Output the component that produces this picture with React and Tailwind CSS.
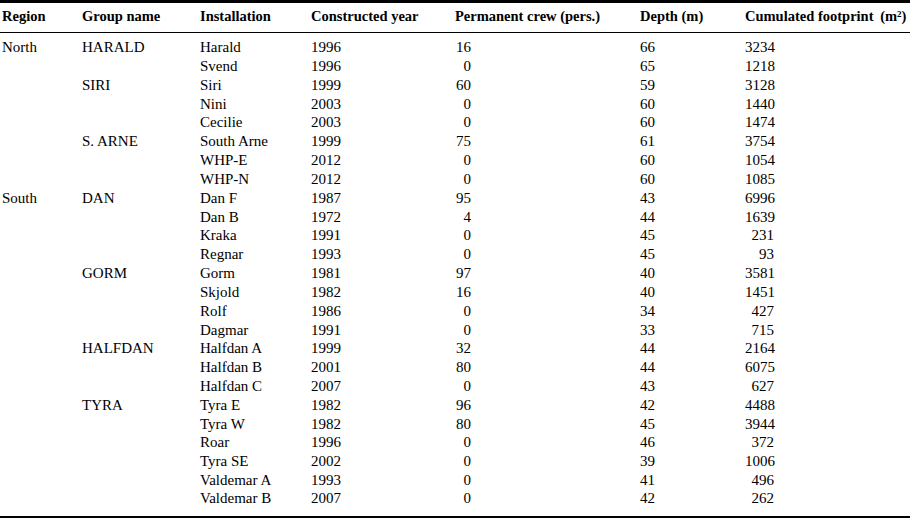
import React from "react";

const rows = [
  ["North", "HARALD", "Harald", "1996", "16", "66", "3234"],
  ["", "", "Svend", "1996", "0", "65", "1218"],
  ["", "SIRI", "Siri", "1999", "60", "59", "3128"],
  ["", "", "Nini", "2003", "0", "60", "1440"],
  ["", "", "Cecilie", "2003", "0", "60", "1474"],
  ["", "S. ARNE", "South Arne", "1999", "75", "61", "3754"],
  ["", "", "WHP-E", "2012", "0", "60", "1054"],
  ["", "", "WHP-N", "2012", "0", "60", "1085"],
  ["South", "DAN", "Dan F", "1987", "95", "43", "6996"],
  ["", "", "Dan B", "1972", "4", "44", "1639"],
  ["", "", "Kraka", "1991", "0", "45", "231"],
  ["", "", "Regnar", "1993", "0", "45", "93"],
  ["", "GORM", "Gorm", "1981", "97", "40", "3581"],
  ["", "", "Skjold", "1982", "16", "40", "1451"],
  ["", "", "Rolf", "1986", "0", "34", "427"],
  ["", "", "Dagmar", "1991", "0", "33", "715"],
  ["", "HALFDAN", "Halfdan A", "1999", "32", "44", "2164"],
  ["", "", "Halfdan B", "2001", "80", "44", "6075"],
  ["", "", "Halfdan C", "2007", "0", "43", "627"],
  ["", "TYRA", "Tyra E", "1982", "96", "42", "4488"],
  ["", "", "Tyra W", "1982", "80", "45", "3944"],
  ["", "", "Roar", "1996", "0", "46", "372"],
  ["", "", "Tyra SE", "2002", "0", "39", "1006"],
  ["", "", "Valdemar A", "1993", "0", "41", "496"],
  ["", "", "Valdemar B", "2007", "0", "42", "262"],
];

export default function App() {
  const last = rows.length - 1;
  return (
    <div
      className="w-[910px] h-[518px] bg-white text-black overflow-hidden"
      style={{ fontFamily: '"Liberation Serif", "DejaVu Serif", serif' }}
    >
      <table className="w-[910px] table-fixed border-collapse text-[15px] leading-none">
        <colgroup>
          <col className="w-[82px]" />
          <col className="w-[118px]" />
          <col className="w-[111px]" />
          <col className="w-[144px]" />
          <col className="w-[185px]" />
          <col className="w-[105px]" />
          <col className="w-[165px]" />
        </colgroup>
        <thead>
          <tr className="h-[31px] border-t-[3px] border-b border-black text-left text-[14.5px]">
            <th className="pl-[2px] pb-[2px] font-bold">Region</th>
            <th className="pb-[2px] font-bold">Group name</th>
            <th className="pb-[2px] font-bold">Installation</th>
            <th className="pb-[2px] font-bold">Constructed year</th>
            <th className="pb-[2px] font-bold">Permanent crew (pers.)</th>
            <th className="pb-[2px] font-bold">Depth (m)</th>
            <th className="pb-[2px] font-bold whitespace-nowrap">
              Cumulated footprint <span className="ml-[3px]">(m<sup className="text-[9px]">2</sup>)</span>
            </th>
          </tr>
        </thead>
        <tbody className="border-b-[3px] border-black">
          {rows.map((r, i) => {
            const trH = i === 0 ? "h-[24.5px]" : i === last ? "h-[27px]" : "h-[18.83px]";
            const pad = i === 0 ? "pt-[5.75px]" : i === last ? "pb-[8.25px]" : "";
            return (
              <tr key={i} className={trH}>
                <td className={`pl-[2px] ${pad}`}>{r[0]}</td>
                <td className={pad}>{r[1]}</td>
                <td className={`${pad} whitespace-nowrap`}>{r[2]}</td>
                <td className={pad}>{r[3]}</td>
                <td className={pad}>
                  <span className="inline-block w-[16px] text-right">{r[4]}</span>
                </td>
                <td className={pad}>{r[5]}</td>
                <td className={pad}>
                  <span className="inline-block w-[29px] text-right">{r[6]}</span>
                </td>
              </tr>
            );
          })}
        </tbody>
      </table>
    </div>
  );
}
